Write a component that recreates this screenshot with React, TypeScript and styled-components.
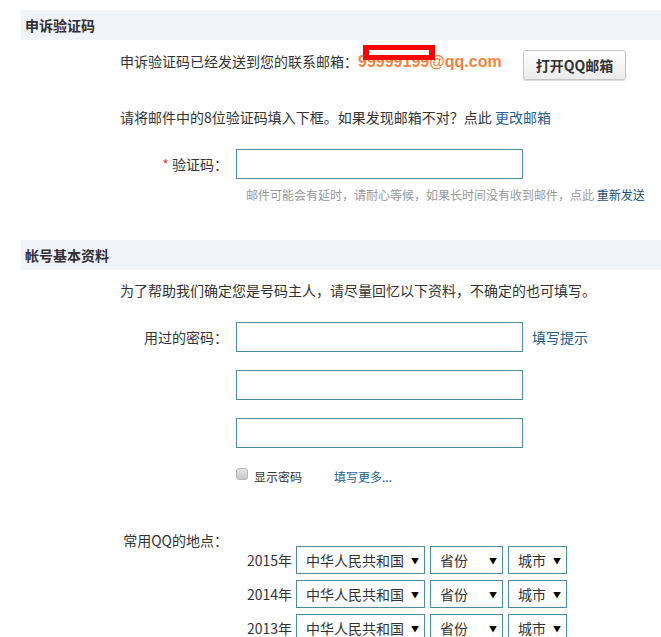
import React from 'react';
import styled, { createGlobalStyle } from 'styled-components';

const GlobalStyle = createGlobalStyle`
  body {
    margin: 0;
    background: #fff;
    color: #333;
    font-family: "Microsoft YaHei", "Noto Sans CJK SC", sans-serif;
    font-size: 14px;
  }
`;

const years = ['2015年', '2014年', '2013年'];

const App: React.FC = () => {
  return (
    <Page>
      <GlobalStyle />
      <SectionHeader>申诉验证码</SectionHeader>
      <NoticeRow>
        <Intro>
          申诉验证码已经发送到您的联系邮箱：
          <Email>
            99999199@qq.com
            <Mask />
          </Email>
        </Intro>
        <QQButton>打开QQ邮箱</QQButton>
      </NoticeRow>
      <Intro $top={26}>
        请将邮件中的8位验证码填入下框。如果发现邮箱不对？点此 <Link>更改邮箱</Link>
      </Intro>
      <FormRow $top={21}>
        <Label>
          <Required>*</Required> 验证码：
        </Label>
        <TextInput type="text" />
      </FormRow>
      <Hint>
        邮件可能会有延时，请耐心等候，如果长时间没有收到邮件，点此 <DarkLink>重新发送</DarkLink>
      </Hint>

      <SectionHeader $top={37}>帐号基本资料</SectionHeader>
      <Intro $top={9}>为了帮助我们确定您是号码主人，请尽量回忆以下资料，不确定的也可填写。</Intro>
      <FormRow $top={21}>
        <Label>用过的密码：</Label>
        <TextInput type="password" />
        <SideLink>填写提示</SideLink>
      </FormRow>
      <FormRow $top={18}>
        <Label />
        <TextInput type="password" />
      </FormRow>
      <FormRow $top={18}>
        <Label />
        <TextInput type="password" />
      </FormRow>
      <CheckRow>
        <CheckBox type="checkbox" />
        <SmallText>显示密码</SmallText>
        <MoreLink>填写更多...</MoreLink>
      </CheckRow>

      <LocationLabel>常用QQ的地点：</LocationLabel>
      <YearList>
        {years.map((year) => (
          <YearRow key={year}>
            <Year>{year}</Year>
            <SelectBox $width={129}>
              <Select>
                <option>中华人民共和国</option>
              </Select>
              <Arrow>▼</Arrow>
            </SelectBox>
            <SelectBox $width={73}>
              <Select>
                <option>省份</option>
              </Select>
              <Arrow>▼</Arrow>
            </SelectBox>
            <SelectBox $width={59}>
              <Select>
                <option>城市</option>
              </Select>
              <Arrow>▼</Arrow>
            </SelectBox>
          </YearRow>
        ))}
      </YearList>
    </Page>
  );
};

const Page = styled.div`
  padding: 10px 0 0 21px;
  width: 640px;
`;

const SectionHeader = styled.div<{ $top?: number }>`
  margin-top: ${(p) => p.$top ?? 0}px;
  height: 30px;
  line-height: 30px;
  padding-left: 4px;
  background: #f0f3f7;
  font-weight: bold;
  font-size: 14px;
  color: #332d36;
`;

const NoticeRow = styled.div`
  display: flex;
  align-items: flex-start;
  margin-top: 10px;
`;

const Intro = styled.div<{ $top?: number }>`
  margin-top: ${(p) => p.$top ?? 0}px;
  padding-left: 99px;
  line-height: 22px;
  white-space: nowrap;
`;

const Email = styled.span`
  position: relative;
  font-family: "Liberation Sans", Arial, sans-serif;
  font-weight: bold;
  font-size: 16px;
  color: #f5823d;
`;

const Mask = styled.span`
  position: absolute;
  left: 5px;
  top: -8px;
  width: 72px;
  height: 15px;
  box-sizing: border-box;
  border: 5px solid #ff0000;
  border-left-width: 6px;
  border-right-width: 6px;
`;

const QQButton = styled.button`
  margin-left: 21px;
  height: 30px;
  padding: 0 12px;
  font-family: "Microsoft YaHei", "Noto Sans CJK SC", sans-serif;
  font-size: 14px;
  font-weight: bold;
  color: #333;
  border: 1px solid #c4c4c4;
  border-radius: 3px;
  background: linear-gradient(#ffffff, #ececec);
  box-shadow: 0 1px 1px rgba(0, 0, 0, 0.15);
`;

const Link = styled.a`
  color: #24608c;
  cursor: pointer;
`;

const DarkLink = styled(Link)`
  color: #1b4d72;
`;

const FormRow = styled.div<{ $top?: number }>`
  display: flex;
  align-items: center;
  margin-top: ${(p) => p.$top ?? 0}px;
`;

const Label = styled.label`
  width: 207px;
  margin-right: 8px;
  text-align: right;
  white-space: nowrap;
`;

const Required = styled.span`
  color: #e0474f;
`;

const TextInput = styled.input`
  box-sizing: border-box;
  width: 287px;
  height: 30px;
  margin: 0;
  padding: 0 8px;
  border: 1px solid #4a8ca6;
  outline: none;
  font-size: 14px;
`;

const SideLink = styled(Link)`
  margin-left: 9px;
`;

const Hint = styled.div`
  margin-top: 8px;
  padding-left: 225px;
  line-height: 16px;
  font-size: 12px;
  color: #999;
  white-space: nowrap;
`;

const CheckRow = styled.div`
  display: flex;
  align-items: center;
  margin-top: 18px;
  padding-left: 215px;
  height: 20px;
`;

const CheckBox = styled.input`
  appearance: none;
  width: 12px;
  height: 12px;
  margin: -4px 6px 0 0;
  border: 1px solid #b8b8b8;
  border-radius: 3px;
  background: linear-gradient(#e6e6e6, #c9c9c9);
`;

const SmallText = styled.span`
  font-size: 12px;
`;

const MoreLink = styled(Link)`
  margin-left: 32px;
  font-size: 12px;
`;

const LocationLabel = styled.div`
  margin-top: 44px;
  width: 207px;
  text-align: right;
  line-height: 20px;
`;

const YearList = styled.div`
  display: flex;
  flex-direction: column;
  gap: 6px;
  margin-top: -4px;
  padding-left: 215px;
`;

const YearRow = styled.div`
  display: flex;
  align-items: center;
  gap: 5px;
`;

const Year = styled.span`
  width: 56px;
  margin-right: -1px;
  text-align: right;
`;

const SelectBox = styled.div<{ $width: number }>`
  position: relative;
  box-sizing: border-box;
  width: ${(p) => p.$width}px;
  height: 28px;
  border: 1px solid #4a8ca6;
`;

const Select = styled.select`
  appearance: none;
  width: 100%;
  height: 100%;
  margin: 0;
  padding: 0 0 0 9px;
  border: none;
  outline: none;
  background: transparent;
  font-family: "Microsoft YaHei", "Noto Sans CJK SC", sans-serif;
  font-size: 14px;
  color: #333;
`;

const Arrow = styled.span`
  position: absolute;
  right: 5px;
  top: 50%;
  transform: translateY(-50%);
  font-size: 8px;
  color: #000;
  pointer-events: none;
`;

export default App;
